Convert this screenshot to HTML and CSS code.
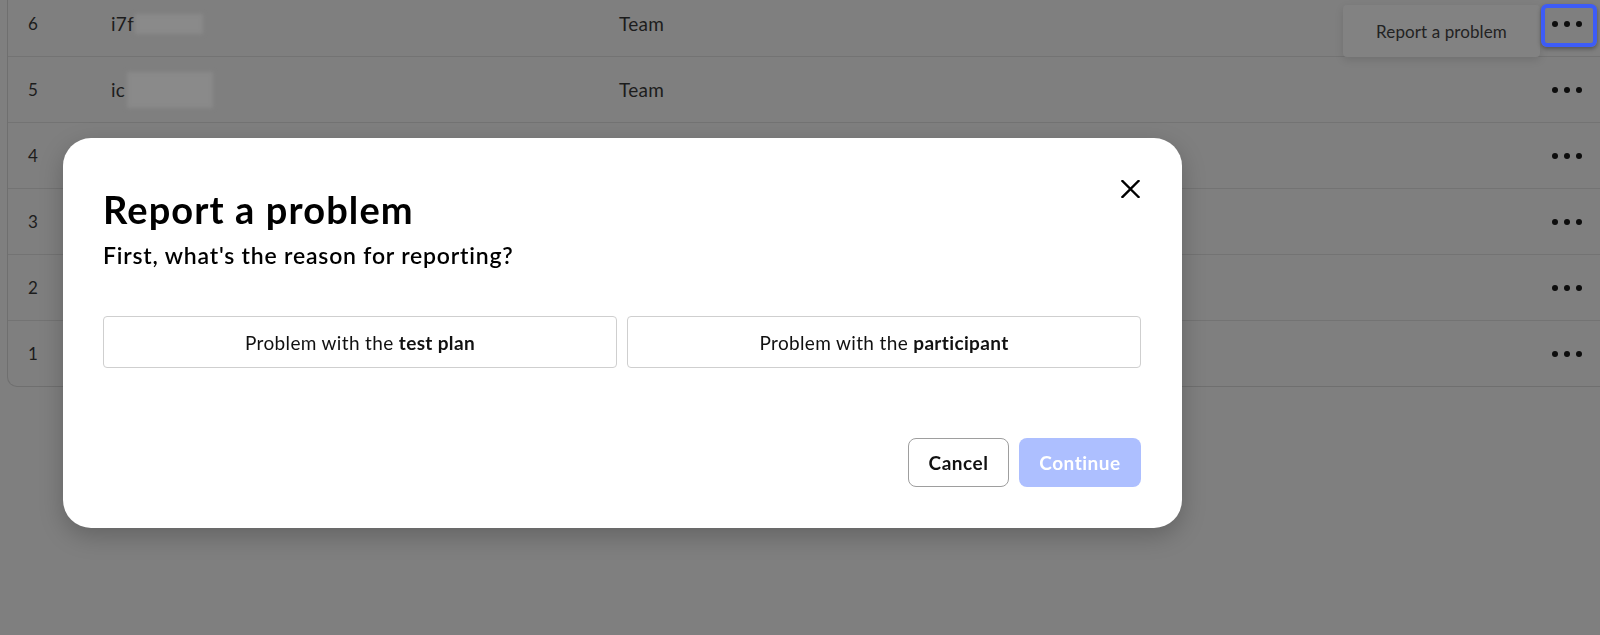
FILE: index.html
```html
<!DOCTYPE html>
<html lang="en">
<head>
<meta charset="utf-8">
<title>Report a problem</title>
<link rel="stylesheet" href="styles.css">
</head>
<body>
<div class="page">
  <div class="table-card">
    <div class="row">
      <span class="num">6</span>
      <span class="id">i7f<span class="redact redact-a"></span></span>
      <span class="type">Team</span>
      <span class="more"><i></i><i></i><i></i></span>
    </div>
    <div class="row">
      <span class="num">5</span>
      <span class="id">ic<span class="redact redact-b"></span></span>
      <span class="type">Team</span>
      <span class="more"><i></i><i></i><i></i></span>
    </div>
    <div class="row">
      <span class="num">4</span>
      <span class="id"></span>
      <span class="type"></span>
      <span class="more"><i></i><i></i><i></i></span>
    </div>
    <div class="row">
      <span class="num">3</span>
      <span class="id"></span>
      <span class="type"></span>
      <span class="more"><i></i><i></i><i></i></span>
    </div>
    <div class="row">
      <span class="num">2</span>
      <span class="id"></span>
      <span class="type"></span>
      <span class="more"><i></i><i></i><i></i></span>
    </div>
    <div class="row row-last">
      <span class="num">1</span>
      <span class="id"></span>
      <span class="type"></span>
      <span class="more"><i></i><i></i><i></i></span>
    </div>
  </div>
</div>

<div class="menu">Report a problem</div>
<div class="focus-ring"></div>

<div class="modal" role="dialog" aria-labelledby="modal-title">
  <div class="modal-head">
    <div class="modal-titles">
      <h1 id="modal-title" class="modal-title">Report a problem</h1>
      <p class="modal-sub">First, what's the reason for reporting?</p>
    </div>
    <button class="close" aria-label="Close">
      <svg width="19" height="18" viewBox="0 0 19 18" aria-hidden="true">
        <path d="M1.5 1 L17.5 17 M17.5 1 L1.5 17" stroke="#000" stroke-width="2.4" stroke-linecap="square" fill="none"/>
      </svg>
    </button>
  </div>
  <div class="options">
    <button class="option">Problem with the <b>test plan</b></button>
    <button class="option">Problem with the <b>participant</b></button>
  </div>
  <div class="footer">
    <button class="btn btn-cancel">Cancel</button>
    <button class="btn btn-continue" disabled>Continue</button>
  </div>
</div>
</body>
</html>
```
FILE: styles.css
```css
* { box-sizing: border-box; }

html, body {
  margin: 0;
  padding: 0;
  height: 100%;
}

body {
  background: #7f7f7f;
  font-family: Lato, "Open Sans", "Liberation Sans", sans-serif;
  color: #1a1a1a;
  overflow: hidden;
}

.page {
  padding-left: 7px;
  margin-right: -20px;
}

.table-card {
  margin-top: -9px;
  border: 1px solid #6f6f6f;
  border-top: none;
  border-radius: 0 0 10px 10px;
}

.row {
  display: flex;
  align-items: center;
  height: 66px;
  border-bottom: 1px solid #737373;
  padding-left: 20px;
  padding-right: 37px;
}

.row-last {
  border-bottom: none;
  height: 65px;
}

.num {
  width: 83px;
  font-size: 17px;
  color: #1c1c1c;
}

.id {
  width: 508px;
  font-size: 19px;
  letter-spacing: 0.3px;
  color: #1c1c1c;
  display: flex;
  align-items: center;
}

.redact {
  display: inline-block;
  background: #8a8a8a;
  filter: blur(2px);
}

.redact-a {
  width: 68px;
  height: 20px;
  margin-left: 1px;
}

.redact-b {
  width: 86px;
  height: 36px;
  margin-left: 2px;
}

.type {
  flex: 1;
  font-size: 19px;
  letter-spacing: 0.3px;
  color: #1c1c1c;
}

.more {
  display: flex;
  gap: 6px;
}

.more i {
  display: block;
  width: 6px;
  height: 6px;
  border-radius: 50%;
  background: #0d0d0d;
}

.menu {
  position: absolute;
  left: 1343px;
  top: 5px;
  width: 197px;
  height: 52px;
  display: flex;
  align-items: center;
  justify-content: center;
  background: #828282;
  border-radius: 4px;
  box-shadow: 0 3px 8px rgba(0, 0, 0, 0.12);
  font-size: 17px;
  letter-spacing: 0.1px;
  color: #222;
}

.focus-ring {
  position: absolute;
  left: 1541px;
  top: 4px;
  width: 56px;
  height: 43px;
  border: 4px solid #3d5cf7;
  border-radius: 6px;
  box-shadow: 0 2px 4px rgba(0, 0, 0, 0.35);
}

.modal {
  position: fixed;
  left: 63px;
  top: 138px;
  width: 1119px;
  background: #fff;
  border-radius: 28px;
  padding: 42px 41px 41px 40px;
  box-shadow: 0 8px 24px rgba(0, 0, 0, 0.22);
}

.modal-head {
  display: flex;
  justify-content: space-between;
  align-items: flex-start;
}

.modal-titles {
  padding-top: 7px;
}

.modal-title {
  margin: 0;
  font-size: 38px;
  line-height: 44px;
  letter-spacing: 1.1px;
  font-weight: 700;
  color: #000;
}

.modal-sub {
  margin: 10px 0 0;
  font-size: 23px;
  line-height: 28px;
  letter-spacing: 0.8px;
  font-weight: 600;
  color: #000;
}

.close {
  border: none;
  background: none;
  padding: 0;
  width: 19px;
  height: 18px;
  margin-right: 1px;
  cursor: pointer;
}

.close svg { display: block; }

.options {
  display: grid;
  grid-template-columns: 1fr 1fr;
  gap: 10px;
  margin-top: 47px;
}

.option {
  height: 52px;
  border: 1px solid #cfcfcf;
  border-radius: 4px;
  background: #fff;
  font-family: inherit;
  font-size: 19px;
  letter-spacing: 0.35px;
  color: #111;
}

.option b { font-weight: 700; }

.footer {
  display: flex;
  justify-content: flex-end;
  gap: 10px;
  margin-top: 70px;
}

.btn {
  height: 49px;
  border-radius: 8px;
  font-family: inherit;
  font-size: 19px;
  letter-spacing: 0.5px;
  font-weight: 700;
}

.btn-cancel {
  width: 101px;
  background: #fff;
  border: 1px solid #9e9e9e;
  color: #111;
}

.btn-continue {
  width: 122px;
  background: #adbfff;
  border: none;
  color: #fff;
}
```
